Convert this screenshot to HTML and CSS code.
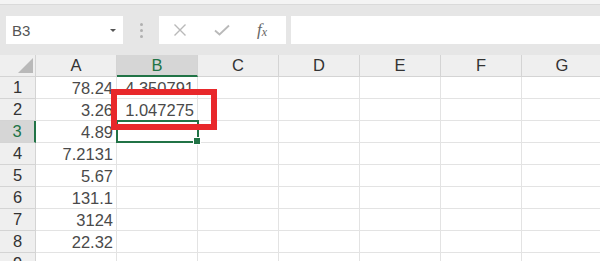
FILE: index.html
```html
<!DOCTYPE html>
<html lang="en">
<head>
  <meta charset="UTF-8"/>
  <title>Sheet</title>
  <link rel="stylesheet" href="styles.css">
</head>
<body>
  <div class="top-strip"></div>

  <div class="formula-bar">
    <div class="name-box">
      <span>B3</span>
      <span class="caret"></span>
    </div>
    <div class="grip"><i></i><i></i><i></i></div>
    <div class="fn-box">
      <svg class="icon" width="14" height="14" viewBox="0 0 14 14">
        <path d="M1.5 1.5 L12.5 12.5 M12.5 1.5 L1.5 12.5" stroke="#b9b9b9" stroke-width="1.4" fill="none"/>
      </svg>
      <svg class="icon" width="16" height="12" viewBox="0 0 16 12">
        <path d="M1 6.5 L5.5 10.5 L15 1.5" stroke="#b9b9b9" stroke-width="1.8" fill="none"/>
      </svg>
      <span class="fx">f<sub>x</sub></span>
    </div>
    <div class="formula-input"></div>
  </div>

  <div class="sheet">
    <div class="grid">
      <div class="hd corner"><span class="tri"></span></div>
      <div class="hd col">A</div>
      <div class="hd col active">B</div>
      <div class="hd col">C</div>
      <div class="hd col">D</div>
      <div class="hd col">E</div>
      <div class="hd col">F</div>
      <div class="hd col">G</div>

      <div class="hd row">1</div>
      <div class="cell">78.24</div><div class="cell">4.350791</div><div class="cell"></div><div class="cell"></div><div class="cell"></div><div class="cell"></div><div class="cell"></div>

      <div class="hd row">2</div>
      <div class="cell">3.26</div><div class="cell">1.047275</div><div class="cell"></div><div class="cell"></div><div class="cell"></div><div class="cell"></div><div class="cell"></div>

      <div class="hd row active">3</div>
      <div class="cell">4.89</div><div class="cell selected"></div><div class="cell"></div><div class="cell"></div><div class="cell"></div><div class="cell"></div><div class="cell"></div>

      <div class="hd row">4</div>
      <div class="cell">7.2131</div><div class="cell"></div><div class="cell"></div><div class="cell"></div><div class="cell"></div><div class="cell"></div><div class="cell"></div>

      <div class="hd row">5</div>
      <div class="cell">5.67</div><div class="cell"></div><div class="cell"></div><div class="cell"></div><div class="cell"></div><div class="cell"></div><div class="cell"></div>

      <div class="hd row">6</div>
      <div class="cell">131.1</div><div class="cell"></div><div class="cell"></div><div class="cell"></div><div class="cell"></div><div class="cell"></div><div class="cell"></div>

      <div class="hd row">7</div>
      <div class="cell">3124</div><div class="cell"></div><div class="cell"></div><div class="cell"></div><div class="cell"></div><div class="cell"></div><div class="cell"></div>

      <div class="hd row">8</div>
      <div class="cell">22.32</div><div class="cell"></div><div class="cell"></div><div class="cell"></div><div class="cell"></div><div class="cell"></div><div class="cell"></div>

      <div class="hd row">9</div>
      <div class="cell"></div><div class="cell"></div><div class="cell"></div><div class="cell"></div><div class="cell"></div><div class="cell"></div><div class="cell"></div>
    </div>

    <!-- annotation box drawn over the sheet -->
    <div class="highlight"></div>
  </div>
</body>
</html>
```

FILE: styles.css
```css
:root {
  --toolbar: #e6e6e6;
  --header: #efefef;
  --header-active: #d6d6d6;
  --header-line: #d4d4d4;
  --grid-line: #e3e3e3;
  --green: #217346;
  --text: #4a4a4a;
  --mark: #e8282b;
}

* {
  box-sizing: border-box;
  margin: 0;
  padding: 0;
}

body {
  width: 600px;
  height: 261px;
  overflow: hidden;
  background: #fff;
  font-family: 'Liberation Sans', Arial, sans-serif;
  color: var(--text);
}

.top-strip {
  height: 5px;
  background: #f4f4f4;
  border-bottom: 1px solid #dadada;
}

.formula-bar {
  height: 50px;
  background: var(--toolbar);
  display: flex;
  align-items: center;
  padding-left: 6px;
}

.name-box {
  width: 117px;
  height: 28px;
  background: #fff;
  display: flex;
  align-items: center;
  justify-content: space-between;
  padding: 0 7px 0 6px;
  font-size: 15px;
  color: #555;
}

.caret {
  width: 0;
  height: 0;
  border-left: 3px solid transparent;
  border-right: 3px solid transparent;
  border-top: 3px solid #555;
}

.grip {
  width: 36px;
  display: flex;
  flex-direction: column;
  align-items: center;
  gap: 3px;
}

.grip i {
  width: 3px;
  height: 3px;
  border-radius: 50%;
  background: #b0b0b0;
}

.fn-box {
  width: 127px;
  height: 28px;
  background: #fff;
  display: flex;
  align-items: center;
  padding-left: 14px;
  gap: 27px;
}

.fx {
  font-family: 'Liberation Serif', 'Times New Roman', serif;
  font-style: italic;
  font-size: 17px;
  color: #666;
}

.fx sub {
  font-size: 12px;
  vertical-align: -1px;
}

.formula-input {
  flex: 1;
  height: 28px;
  margin-left: 5px;
  background: #fff;
}

.sheet {
  position: relative;
}

.grid {
  display: grid;
  grid-template-columns: 36px repeat(7, 81px);
  grid-auto-rows: 22px;
}

.hd {
  background: var(--header);
  border-right: 1px solid var(--header-line);
  border-bottom: 1px solid var(--header-line);
  font-size: 16.5px;
  color: #333;
  display: flex;
  align-items: center;
  justify-content: center;
}

.corner {
  justify-content: flex-end;
  align-items: flex-end;
  padding: 0 2px 3px 0;
}

.tri {
  width: 15px;
  height: 15px;
  background: #b9b9b9;
  clip-path: polygon(100% 0, 100% 100%, 0 100%);
}

.hd.col.active {
  background: var(--header-active);
  color: var(--green);
  border-bottom: 2px solid var(--green);
}

.hd.row.active {
  background: var(--header-active);
  color: var(--green);
  border-right: 2px solid var(--green);
}

.cell {
  border-right: 1px solid var(--grid-line);
  border-bottom: 1px solid var(--grid-line);
  font-size: 16.5px;
  color: var(--text);
  text-align: right;
  padding: 2px 3px 0 0;
  line-height: 19px;
  white-space: nowrap;
}

.cell.selected {
  position: relative;
  border: 2px solid var(--green);
  margin: -1px 0 0 -1px;
  width: 83px;
  height: 23px;
}

.cell.selected::after {
  content: '';
  position: absolute;
  right: -4px;
  bottom: -4px;
  width: 6px;
  height: 6px;
  background: var(--green);
  border: 1px solid #fff;
}

.highlight {
  position: absolute;
  left: 111px;
  top: 34px;
  width: 106px;
  height: 41px;
  border: 6px solid var(--mark);
}
```
